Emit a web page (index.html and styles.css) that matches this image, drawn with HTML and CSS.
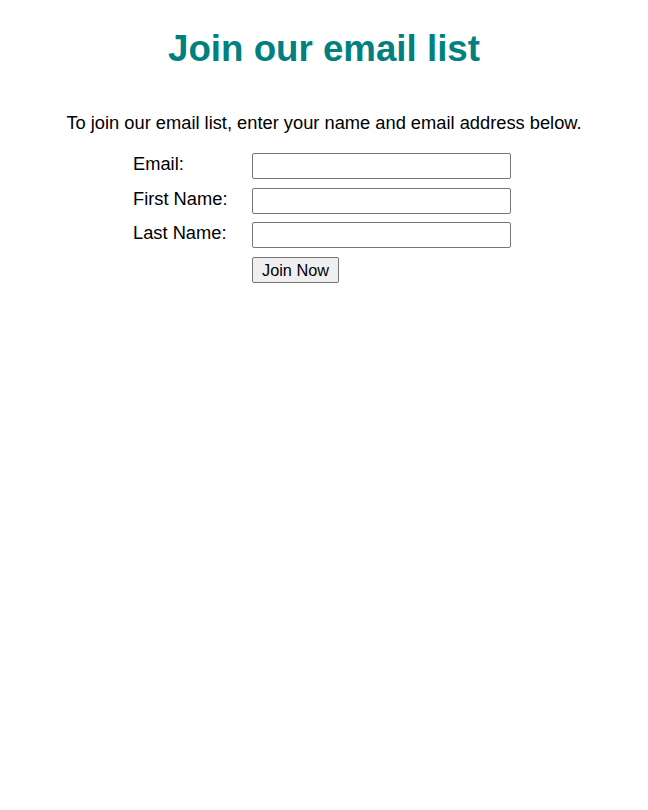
FILE: index.html
```html
<!DOCTYPE html>
<html>
<head>
<meta charset="utf-8">
<link rel="stylesheet" href="styles.css">
</head>
<body>
<h1 class="title">Join our email list</h1>
<p class="intro">To join our email list, enter your name and email address below.</p>
<form class="signup">
  <label class="lbl" for="email">Email:</label>
  <input class="field" id="email" type="text">
  <label class="lbl" for="first">First Name:</label>
  <input class="field" id="first" type="text">
  <label class="lbl" for="last">Last Name:</label>
  <input class="field" id="last" type="text">
  <span></span>
  <div class="actions"><button class="btn" type="button">Join Now</button></div>
</form>
</body>
</html>
```
FILE: styles.css
```css
html, body { background: #fff; }
body {
  margin: 8px;
  font-family: "Liberation Sans", Arial, sans-serif;
  font-size: 18.3px;
  color: #000;
}
.title {
  font-size: 36.7px;
  color: #008080;
  text-align: center;
  margin: 20px 0 0;
}
.intro {
  text-align: center;
  margin: 42px 0 0;
}
.signup {
  display: grid;
  grid-template-columns: 119px 259px;
  row-gap: 8.7px;
  justify-content: start;
  margin: 19px 0 0 125px;
  align-items: center;
}
.lbl { line-height: 20px; align-self: start; padding-top: 1px; }
.field {
  box-sizing: border-box;
  width: 259px;
  height: 26px;
  border: 1px solid #767676;
  border-radius: 2px;
  font: inherit;
  padding: 1px 2px;
  margin: 0;
}
.actions { display: flex; }
.btn {
  box-sizing: border-box;
  height: 26px;
  width: 87px;
  font-family: "Liberation Sans", Arial, sans-serif;
  font-size: 16.3px;
  background: #efefef;
  border: 1px solid #767676;
  border-radius: 2px;
  padding: 0 6px;
  color: #000;
}
```
